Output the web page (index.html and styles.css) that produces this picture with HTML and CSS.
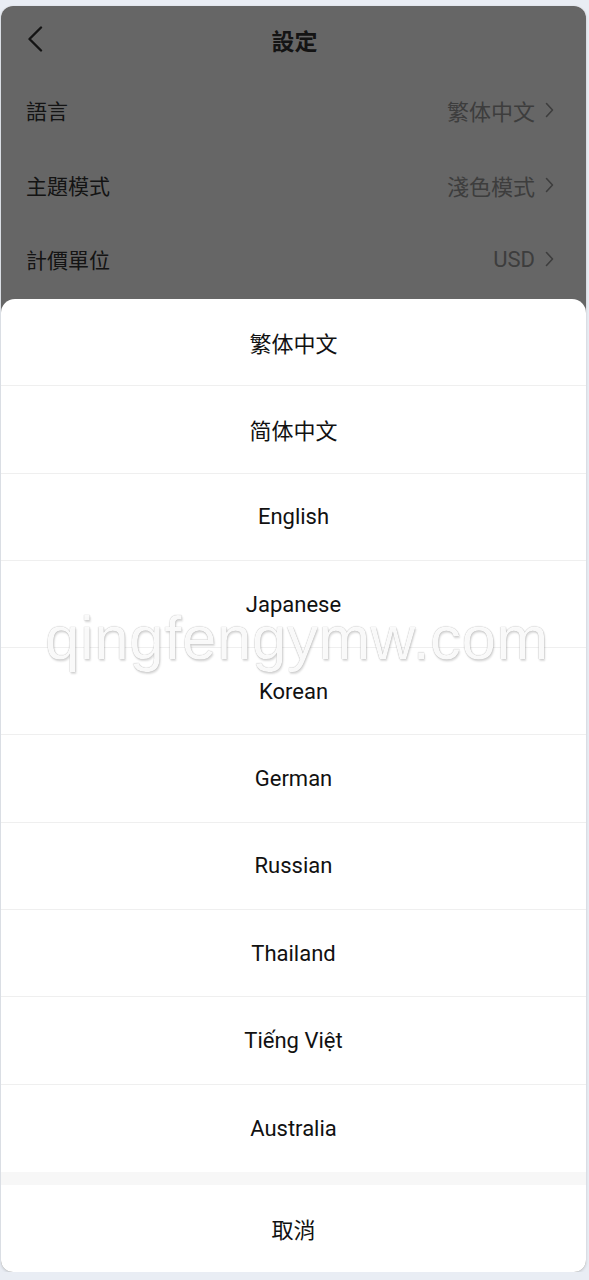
FILE: index.html
```html
<!DOCTYPE html>
<html lang="zh-Hant">
<head>
<meta charset="utf-8">
<title>設定</title>
<link rel="stylesheet" href="styles.css">
</head>
<body>
<div class="frame">
  <div class="page">
    <header class="header">
      <span class="back">
        <svg width="16" height="26" viewBox="0 0 16 26"><path d="M14 1.5 L2.5 13 L14 24.5" fill="none" stroke="#333" stroke-width="2.4" stroke-linecap="round" stroke-linejoin="round"/></svg>
      </span>
      <h1 class="title">設定</h1>
      <span class="spacer"></span>
    </header>
    <div class="row">
      <span class="label">語言</span>
      <span class="value">繁体中文<svg class="chev" width="9" height="16" viewBox="0 0 9 16"><path d="M1.5 1.5 L7.5 8 L1.5 14.5" fill="none" stroke="#999" stroke-width="1.6" stroke-linecap="round" stroke-linejoin="round"/></svg></span>
    </div>
    <div class="row">
      <span class="label">主題模式</span>
      <span class="value">淺色模式<svg class="chev" width="9" height="16" viewBox="0 0 9 16"><path d="M1.5 1.5 L7.5 8 L1.5 14.5" fill="none" stroke="#999" stroke-width="1.6" stroke-linecap="round" stroke-linejoin="round"/></svg></span>
    </div>
    <div class="row">
      <span class="label">計價單位</span>
      <span class="value">USD<svg class="chev" width="9" height="16" viewBox="0 0 9 16"><path d="M1.5 1.5 L7.5 8 L1.5 14.5" fill="none" stroke="#999" stroke-width="1.6" stroke-linecap="round" stroke-linejoin="round"/></svg></span>
    </div>
  </div>
  <div class="overlay"></div>
  <div class="sheet">
    <ul class="options">
      <li class="option">繁体中文</li>
      <li class="option">简体中文</li>
      <li class="option">English</li>
      <li class="option">Japanese</li>
      <li class="option">Korean</li>
      <li class="option">German</li>
      <li class="option">Russian</li>
      <li class="option">Thailand</li>
      <li class="option">Tiếng Việt</li>
      <li class="option last">Australia</li>
    </ul>
    <div class="sep"></div>
    <div class="cancel">取消</div>
  </div>
  <div class="watermark">qingfengymw.com</div>
</div>
</body>
</html>
```

FILE: styles.css
```css
* { box-sizing: border-box; }
html, body {
  margin: 0;
  padding: 0;
  background: #e9edf4;
}
body {
  padding: 6px 0 0 1px;
  font-family: Roboto, "Noto Sans CJK TC", "Noto Sans", sans-serif;
}
.frame {
  position: relative;
  width: 585px;
  height: 1266px;
  border-radius: 12px;
  overflow: hidden;
  background: #fff;
  box-shadow: 0 1px 3px rgba(0, 0, 0, 0.18);
}
.page {
  background: #fff;
  height: 100%;
}
.header {
  height: 67px;
  display: flex;
  align-items: center;
  justify-content: space-between;
  padding: 0 24px 0 26px;
}
.back {
  width: 40px;
  display: flex;
  align-items: center;
  margin-top: -2px;
}
.spacer { width: 40px; }
.title {
  margin: 0;
  font-size: 23px;
  font-weight: 700;
  color: #333;
}
.row {
  height: 74.5px;
  display: flex;
  align-items: center;
  justify-content: space-between;
  padding: 0 32px 0 25px;
}
.label {
  font-size: 21px;
  color: #333;
}
.value {
  display: flex;
  align-items: center;
  gap: 10px;
  font-size: 22px;
  color: #999;
}
.chev { display: block; }
.overlay {
  position: absolute;
  inset: 0;
  background: rgba(0, 0, 0, 0.6);
}
.sheet {
  position: absolute;
  left: 0;
  right: 0;
  bottom: 0;
  height: 973px;
  background: #fff;
  border-radius: 14px 14px 0 0;
  display: flex;
  flex-direction: column;
}
.options {
  list-style: none;
  margin: 0;
  padding: 0;
}
.option {
  height: 87.3px;
  display: flex;
  align-items: center;
  justify-content: center;
  border-bottom: 1px solid #efefef;
  font-size: 22px;
  color: #111;
}
.option.last { border-bottom: none; }
.sep {
  height: 13px;
  background: #f7f7f7;
}
.cancel {
  flex: 1;
  display: flex;
  align-items: center;
  justify-content: center;
  font-size: 22px;
  color: #111;
}
.watermark {
  position: absolute;
  left: 44px;
  top: 596px;
  font-family: "Liberation Sans", Arial, sans-serif;
  font-size: 62px;
  letter-spacing: 0.5px;
  color: rgba(255, 255, 255, 0.95);
  text-shadow: 0 0 1px rgba(0, 0, 0, 0.4), 1px 2px 2px rgba(0, 0, 0, 0.14);
  pointer-events: none;
  white-space: nowrap;
}
```
